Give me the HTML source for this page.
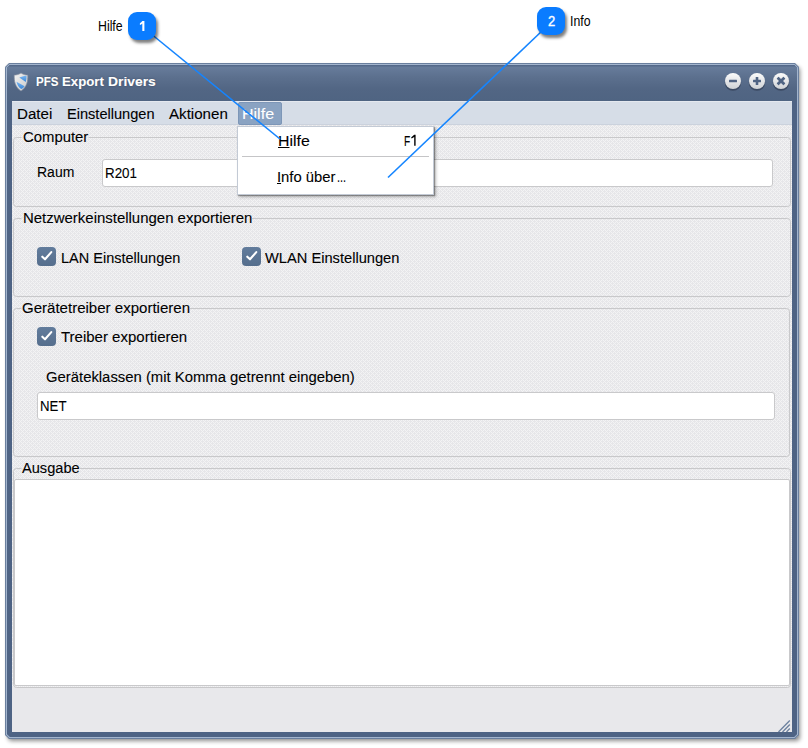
<!DOCTYPE html>
<html><head><meta charset="utf-8">
<style>
html,body{margin:0;padding:0;}
body{width:808px;height:748px;overflow:hidden;background:#fff;position:relative;font-family:"Liberation Sans",sans-serif;}
.a{position:absolute;}
.t{position:absolute;white-space:pre;line-height:1;-webkit-text-stroke:.1px currentColor;}
.inp{position:absolute;background:#fff;border:1px solid #c9c9cb;border-radius:3px;box-sizing:border-box;}
.cb{position:absolute;width:19px;height:19px;}
.badge{position:absolute;width:28px;height:28px;border-radius:9px;background:#0a7cff;box-shadow:2px 3px 3px rgba(0,0,0,.5);}
</style></head><body>
<div class="a" style="left:6px;top:64px;width:792px;height:674px;border-radius:4px;box-shadow:2px 3px 4px rgba(0,0,0,.45),0 0 2px rgba(0,0,0,.2);"></div>
<svg class="a" style="left:5px;top:63px" width="794" height="676"><path d="M4 0 H790 L794 4 V672 L790 676 H4 L0 672 V4 Z" fill="#6a7f9e"/><path d="M4.41 1 H789.59 L793 4.41 V671.59 L789.59 675 H4.41 L1 671.59 V4.41 Z" fill="#a3b5ce"/><path d="M4.83 2 H789.17 L792 4.83 V671.17 L789.17 674 H4.83 L2 671.17 V4.83 Z" fill="#4e6384"/></svg>
<div class="a" style="left:7px;top:65px;width:790px;height:36px;background:linear-gradient(#54698a 0,#54698a 1px,#677c9b 2px,#5c708e 12px,#526684 24px,#4f6482 100%);clip-path:polygon(2.83px 0,787.17px 0,790px 2.83px,790px 36px,0 36px,0 2.83px);"></div>
<div class="a" style="left:12px;top:101px;width:780px;height:631px;background:#e8e8eb;"></div>
<div class="a" style="left:12px;top:101px;width:780px;height:24px;background:linear-gradient(#e4e8ef 0,#e4e8ef 1px,#d6dde7 1px,#d6dde7 23px,#cbd2dd 23px);"></div>
<svg class="a" style="left:12px;top:125px" width="780" height="564">
<defs><pattern id="p" width="4" height="4" patternUnits="userSpaceOnUse"><rect width="4" height="4" fill="#e6e6e9"/><g fill="#f3f3f4"><rect x="0" y="0" width="1" height="1"/><rect x="1" y="1" width="1" height="1"/><rect x="1" y="3" width="1" height="1"/><rect x="2" y="2" width="1" height="1"/><rect x="3" y="1" width="1" height="1"/><rect x="3" y="3" width="1" height="1"/></g></pattern></defs>
<rect width="780" height="562" fill="url(#p)"/>
<g transform="translate(-12,-125)">
<path d="M88.5 137.5 H787.5 Q790.5 137.5 790.5 140.5 V203.5 Q790.5 206.5 787.5 206.5 H16.5 Q13.5 206.5 13.5 203.5 V140.5 Q13.5 137.5 16.5 137.5 H21.5" fill="none" stroke="#c8c8ca" stroke-width="1"/>
<path d="M252 218.5 H787.5 Q790.5 218.5 790.5 221.5 V293.5 Q790.5 296.5 787.5 296.5 H16.5 Q13.5 296.5 13.5 293.5 V221.5 Q13.5 218.5 16.5 218.5 H21.5" fill="none" stroke="#c8c8ca" stroke-width="1"/>
<path d="M190 308.5 H786.5 Q789.5 308.5 789.5 311.5 V453.5 Q789.5 456.5 786.5 456.5 H16.5 Q13.5 456.5 13.5 453.5 V311.5 Q13.5 308.5 16.5 308.5 H21.5" fill="none" stroke="#c8c8ca" stroke-width="1"/>
<path d="M80 468.5 H787.5 Q790.5 468.5 790.5 471.5 V684.5 Q790.5 687.5 787.5 687.5 H16.5 Q13.5 687.5 13.5 684.5 V471.5 Q13.5 468.5 16.5 468.5 H21.5" fill="none" stroke="#c8c8ca" stroke-width="1"/>
</g></svg>
<div class="a" style="left:238px;top:102px;width:42px;height:21px;background:#8aa3c2;border:1px solid #7d96b7;border-radius:2px;"></div>
<div class="t" style="left:16.56px;top:106px;font-size:15.3px;font-weight:normal;color:#000;transform:scaleX(0.9881);transform-origin:0 0;">Datei</div>
<div class="t" style="left:67.31px;top:106px;font-size:15.3px;font-weight:normal;color:#000;transform:scaleX(0.9531);transform-origin:0 0;">Einstellungen</div>
<div class="t" style="left:169.20px;top:106px;font-size:15.3px;font-weight:normal;color:#000;transform:scaleX(0.9880);transform-origin:0 0;">Aktionen</div>
<div class="t" style="left:241.69px;top:106px;font-size:15.3px;font-weight:normal;color:#fff;transform:scaleX(1.0470);transform-origin:0 0;">Hilfe</div>
<div class="t" style="left:22.97px;top:129px;font-size:15.3px;font-weight:normal;color:#000;transform:scaleX(0.9721);transform-origin:0 0;">Computer</div>
<div class="t" style="left:22.68px;top:210px;font-size:15.3px;font-weight:normal;color:#000;transform:scaleX(0.9776);transform-origin:0 0;">Netzwerkeinstellungen exportieren</div>
<div class="t" style="left:21.76px;top:300px;font-size:15.3px;font-weight:normal;color:#000;transform:scaleX(0.9832);transform-origin:0 0;">Gerätetreiber exportieren</div>
<div class="t" style="left:21.70px;top:460px;font-size:15.3px;font-weight:normal;color:#000;transform:scaleX(0.9540);transform-origin:0 0;">Ausgabe</div>
<div class="t" style="left:36.96px;top:164px;font-size:15.3px;font-weight:normal;color:#000;transform:scaleX(0.9143);transform-origin:0 0;">Raum</div>
<div class="inp" style="left:102px;top:159px;width:671px;height:28px;"></div>
<div class="t" style="left:105.41px;top:165px;font-size:15.3px;font-weight:normal;color:#000;transform:scaleX(0.8754);transform-origin:0 0;">R201</div>
<svg class="cb" style="left:37px;top:247px" width="19" height="19" viewBox="0 0 19 19"><defs><linearGradient id="cg" x1="0" y1="0" x2="0" y2="1"><stop offset="0" stop-color="#627c9c"/><stop offset="1" stop-color="#556e8d"/></linearGradient></defs><rect x="0" y="0" width="19" height="19" rx="4" fill="url(#cg)"/><path d="M5.3 9.7 L8 12.3 L14.3 5.1" fill="none" stroke="#fff" stroke-width="2.1" stroke-linecap="round" stroke-linejoin="round"/></svg>
<div class="t" style="left:60.81px;top:250px;font-size:15.3px;font-weight:normal;color:#000;transform:scaleX(0.9487);transform-origin:0 0;">LAN Einstellungen</div>
<svg class="cb" style="left:242px;top:247px" width="19" height="19" viewBox="0 0 19 19"><defs><linearGradient id="cg" x1="0" y1="0" x2="0" y2="1"><stop offset="0" stop-color="#627c9c"/><stop offset="1" stop-color="#556e8d"/></linearGradient></defs><rect x="0" y="0" width="19" height="19" rx="4" fill="url(#cg)"/><path d="M5.3 9.7 L8 12.3 L14.3 5.1" fill="none" stroke="#fff" stroke-width="2.1" stroke-linecap="round" stroke-linejoin="round"/></svg>
<div class="t" style="left:265.30px;top:250px;font-size:15.3px;font-weight:normal;color:#000;transform:scaleX(0.9580);transform-origin:0 0;">WLAN Einstellungen</div>
<svg class="cb" style="left:37px;top:327px" width="19" height="19" viewBox="0 0 19 19"><defs><linearGradient id="cg" x1="0" y1="0" x2="0" y2="1"><stop offset="0" stop-color="#627c9c"/><stop offset="1" stop-color="#556e8d"/></linearGradient></defs><rect x="0" y="0" width="19" height="19" rx="4" fill="url(#cg)"/><path d="M5.3 9.7 L8 12.3 L14.3 5.1" fill="none" stroke="#fff" stroke-width="2.1" stroke-linecap="round" stroke-linejoin="round"/></svg>
<div class="t" style="left:60.75px;top:329px;font-size:15.3px;font-weight:normal;color:#000;transform:scaleX(0.9804);transform-origin:0 0;">Treiber exportieren</div>
<div class="t" style="left:45.87px;top:369px;font-size:15.3px;font-weight:normal;color:#000;transform:scaleX(0.9708);transform-origin:0 0;">Geräteklassen (mit Komma getrennt eingeben)</div>
<div class="inp" style="left:37px;top:392px;width:738px;height:28px;"></div>
<div class="t" style="left:40.12px;top:398px;font-size:15.3px;font-weight:normal;color:#000;transform:scaleX(0.8655);transform-origin:0 0;">NET</div>
<div class="inp" style="left:14px;top:479px;width:776px;height:207px;border-radius:2px;"></div>
<svg class="a" style="left:770px;top:712px" width="22" height="20"><g stroke="#6a7f9e" stroke-width="1.3"><line x1="8.5" y1="20" x2="19.8" y2="8.5"/><line x1="12.5" y1="20" x2="19.8" y2="12.5"/><line x1="16.5" y1="20" x2="19.8" y2="16.5"/></g></svg>
<svg class="a" style="left:13px;top:72px" width="16" height="20" viewBox="0 0 16 20">
<defs><linearGradient id="sh" x1="0" y1="0" x2="1" y2="1"><stop offset="0" stop-color="#f4f4f4"/><stop offset="1" stop-color="#c9c9c9"/></linearGradient>
<linearGradient id="sb" x1="0" y1="0" x2="0" y2="1"><stop offset="0" stop-color="#7ab4ee"/><stop offset="1" stop-color="#3a88da"/></linearGradient></defs>
<path d="M8 1 C5.5 2.6 3.5 3 1.2 3 C1 9 2 15 8 19 C14 15 15 9 14.8 3 C12.5 3 10.5 2.6 8 1Z" fill="url(#sh)" stroke="#7f8a9c" stroke-width=".7"/>
<path d="M6.3 5.4 C8.5 4.9 10.5 4.4 12.2 3.8 C12.8 4 13.3 4.1 13.6 4.1 C13.6 6 13.3 8.2 12.8 10 Z" fill="url(#sb)"/>
<path d="M3.5 9.8 L11.6 14.3 C10.8 15.5 9.6 16.5 8.2 17.1 C5.8 15.6 4.2 12.9 3.5 9.8Z" fill="url(#sb)"/>
</svg>
<div class="t" style="left:36.03px;top:75px;font-size:13px;font-weight:bold;color:#fff;transform:scaleX(0.8875);transform-origin:0 0;text-shadow:0 0 2px rgba(40,50,70,.6);">PFS</div>
<div class="t" style="left:61.94px;top:75px;font-size:13px;font-weight:bold;color:#fff;transform:scaleX(1.0161);transform-origin:0 0;text-shadow:0 0 2px rgba(40,50,70,.6);">Export</div>
<div class="t" style="left:108.10px;top:75px;font-size:13px;font-weight:bold;color:#fff;transform:scaleX(1.0667);transform-origin:0 0;text-shadow:0 0 2px rgba(40,50,70,.6);">Drivers</div>
<svg class="a" style="left:723px;top:71px" width="20" height="22" viewBox="0 0 20 22"><defs><linearGradient id="bg" x1="0" y1="0" x2="0" y2="1"><stop offset="0" stop-color="#fbfbfb"/><stop offset="1" stop-color="#cfd2d6"/></linearGradient></defs><circle cx="10" cy="11.6" r="8.2" fill="rgba(30,40,60,.45)"/><circle cx="10" cy="10" r="8" fill="url(#bg)"/><rect x="6" y="8.7" width="8" height="2.6" rx=".5" fill="#4f6383"/></svg>
<svg class="a" style="left:747px;top:71px" width="20" height="22" viewBox="0 0 20 22"><defs><linearGradient id="bg" x1="0" y1="0" x2="0" y2="1"><stop offset="0" stop-color="#fbfbfb"/><stop offset="1" stop-color="#cfd2d6"/></linearGradient></defs><circle cx="10" cy="11.6" r="8.2" fill="rgba(30,40,60,.45)"/><circle cx="10" cy="10" r="8" fill="url(#bg)"/><rect x="6" y="8.7" width="8" height="2.6" rx=".5" fill="#4f6383"/><rect x="8.7" y="6" width="2.6" height="8" rx=".5" fill="#4f6383"/></svg>
<svg class="a" style="left:771px;top:71px" width="20" height="22" viewBox="0 0 20 22"><defs><linearGradient id="bg" x1="0" y1="0" x2="0" y2="1"><stop offset="0" stop-color="#fbfbfb"/><stop offset="1" stop-color="#cfd2d6"/></linearGradient></defs><circle cx="10" cy="11.6" r="8.2" fill="rgba(30,40,60,.45)"/><circle cx="10" cy="10" r="8" fill="url(#bg)"/><g transform="rotate(45 10 10)"><rect x="5.2" y="8.6" width="9.6" height="2.8" rx=".5" fill="#4f6383"/><rect x="8.6" y="5.2" width="2.8" height="9.6" rx=".5" fill="#4f6383"/></g></svg>
<div class="a" style="left:237px;top:126px;width:197px;height:69px;box-sizing:border-box;background:#fff;border:1px solid #c3cad5;box-shadow:1px 1px 1px rgba(0,0,0,.3),2px 2px 3px rgba(0,0,0,.25);"></div>
<div class="t" style="left:277.50px;top:133px;font-size:15.3px;font-weight:normal;color:#000;transform:scaleX(1.0365);transform-origin:0 0;"><span style="text-decoration:underline">H</span>ilfe</div>
<div class="t" style="left:403.77px;top:133px;font-size:15.3px;font-weight:normal;color:#000;transform:scaleX(0.6667);transform-origin:0 0;">F</div>
<div class="a" style="left:242px;top:156px;width:187px;height:1px;background:#c5c5c7;"></div>
<div class="t" style="left:277.45px;top:169px;font-size:15.3px;font-weight:normal;color:#000;transform:scaleX(0.9685);transform-origin:0 0;"><span style="text-decoration:underline">I</span>nfo über</div>
<div class="t" style="left:337.24px;top:169px;font-size:15.3px;font-weight:normal;color:#000;transform:scaleX(0.7077);transform-origin:0 0;">...</div>
<svg class="a" style="left:409px;top:133px" width="10" height="14"><path d="M5.2 1.8 H6.6 V12.8 H5.2 V3.9 L2.7 5.5 L2.1 4.4 Z" fill="#000"/></svg>
<svg class="a" style="left:0;top:0" width="808" height="748"><g stroke="#1585ff" stroke-width="1.6"><line x1="150" y1="33" x2="280" y2="139"/><line x1="543" y1="30" x2="388" y2="177.5"/></g></svg>
<div class="badge" style="left:128px;top:12px;"></div>
<svg class="a" style="left:136px;top:18px" width="12" height="16"><path d="M6.3 3 H8.4 V13 H6.3 V5.6 C5.6 6.3 4.8 6.8 3.9 7.1 V5.2 C4.9 4.8 5.7 4 6.3 3Z" fill="#fff"/></svg>
<div class="badge" style="left:537px;top:7px;"></div>
<div class="t" style="left:547.90px;top:13.73px;font-size:14.5px;letter-spacing:0px;font-weight:normal;color:#fff;-webkit-text-stroke:.35px #fff;transform:scaleX(.9);transform-origin:0 0;">2</div>
<div class="t" style="left:97.90px;top:19.15px;font-size:14px;letter-spacing:0px;font-weight:normal;color:#000;-webkit-text-stroke:0;transform:scaleX(.88);transform-origin:0 0;">Hilfe</div>
<div class="t" style="left:569.80px;top:14.15px;font-size:14px;letter-spacing:0px;font-weight:normal;color:#000;-webkit-text-stroke:0;transform:scaleX(.88);transform-origin:0 0;">Info</div>
</body></html>
